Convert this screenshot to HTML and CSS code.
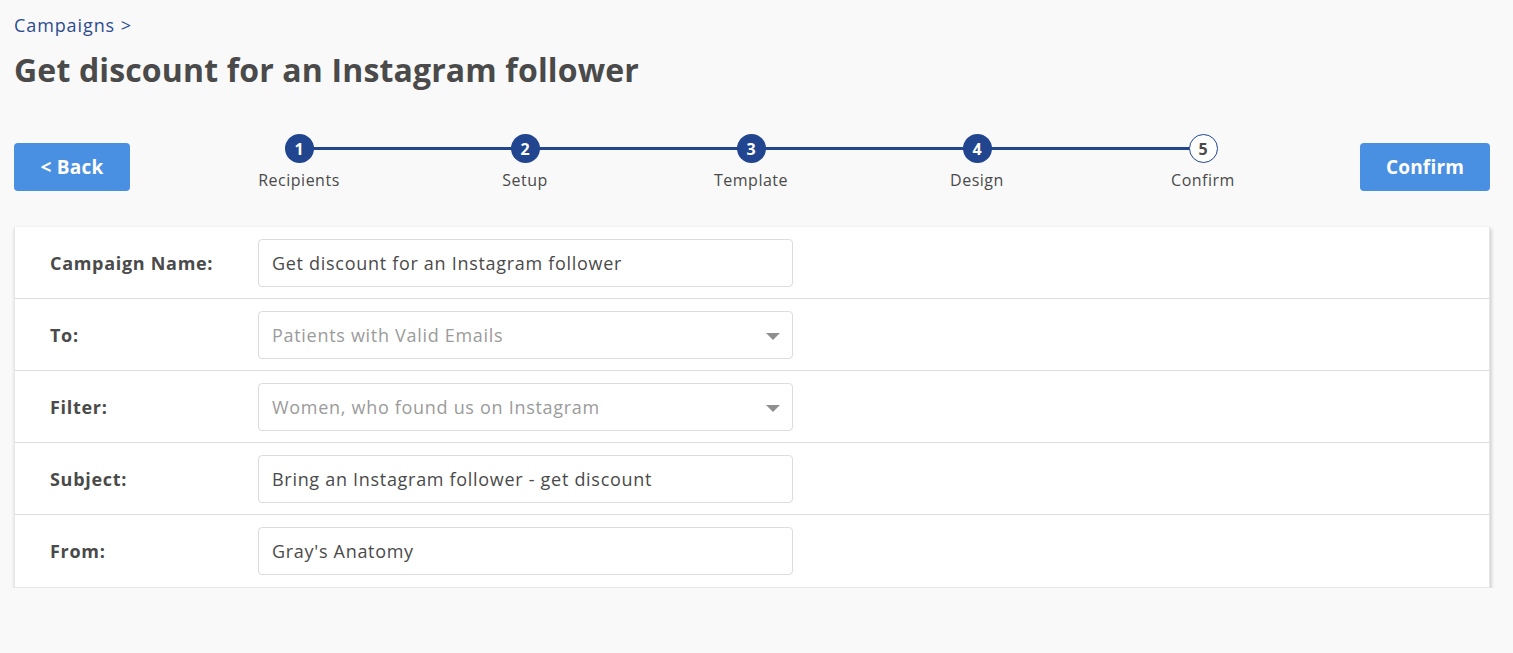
FILE: index.html
```html
<!DOCTYPE html>
<html>
<head>
<meta charset="utf-8">
<link rel="stylesheet" href="styles.css">
</head>
<body>
<div class="page">
  <div class="crumb">Campaigns &gt;</div>
  <h1 class="title">Get discount for an Instagram follower</h1>
  <div class="toolbar">
    <button class="btn">&lt; Back</button>
    <div class="stepper">
      <div class="step done"><span class="dot">1</span><span class="label">Recipients</span></div>
      <div class="step done"><span class="dot">2</span><span class="label">Setup</span></div>
      <div class="step done"><span class="dot">3</span><span class="label">Template</span></div>
      <div class="step done"><span class="dot">4</span><span class="label">Design</span></div>
      <div class="step current"><span class="dot">5</span><span class="label">Confirm</span></div>
    </div>
    <button class="btn confirm">Confirm</button>
  </div>
  <div class="card">
    <div class="row">
      <div class="field-label">Campaign Name:</div>
      <div class="input">Get discount for an Instagram follower</div>
    </div>
    <div class="row">
      <div class="field-label">To:</div>
      <div class="input select placeholder">Patients with Valid Emails<span class="caret"></span></div>
    </div>
    <div class="row">
      <div class="field-label">Filter:</div>
      <div class="input select placeholder">Women, who found us on Instagram<span class="caret"></span></div>
    </div>
    <div class="row">
      <div class="field-label">Subject:</div>
      <div class="input">Bring an Instagram follower - get discount</div>
    </div>
    <div class="row">
      <div class="field-label">From:</div>
      <div class="input">Gray's Anatomy</div>
    </div>
  </div>
</div>
</body>
</html>
```

FILE: styles.css
```css
* { box-sizing: border-box; }
html, body {
  margin: 0;
  background: #f9f9f9;
  font-family: "Open Sans", "Liberation Sans", sans-serif;
  color: #4a4a4a;
}
.page {
  padding: 13px 23px 0 14px;
}
.crumb {
  font-size: 18px;
  line-height: 24px;
  letter-spacing: 0.9px;
  color: #2c4c90;
}
.title {
  margin: 12px 0 0 0;
  font-size: 32px;
  line-height: 42px;
  font-weight: 700;
  letter-spacing: 0.15px;
  color: #4a4a4a;
}
.toolbar {
  display: flex;
  align-items: flex-end;
  margin-top: 43px;
}
.btn {
  width: 116px;
  height: 48px;
  border: none;
  border-radius: 4px;
  background: #4a90e2;
  color: #fff;
  font-family: inherit;
  font-size: 19px;
  font-weight: 700;
  letter-spacing: 0.2px;
  padding: 0;
}
.confirm {
  width: 130px;
  margin-left: auto;
}
.stepper {
  display: flex;
  margin-left: 56px;
}
.step {
  position: relative;
  width: 226px;
  display: flex;
  flex-direction: column;
  align-items: center;
}
.step::after {
  content: "";
  position: absolute;
  left: 113px;
  top: 13px;
  width: 226px;
  height: 3px;
  background: #21468f;
  z-index: 0;
}
.step:last-child::after { display: none; }
.dot {
  position: relative;
  z-index: 1;
  width: 29px;
  height: 29px;
  border-radius: 50%;
  background: #21468f;
  color: #fff;
  font-size: 16px;
  font-weight: 700;
  display: flex;
  align-items: center;
  justify-content: center;
}
.current .dot {
  background: #fff;
  border: 1.5px solid #21468f;
  color: #4a4a4a;
}
.label {
  margin-top: 6px;
  font-size: 16px;
  line-height: 22px;
  letter-spacing: 0.5px;
  color: #4a4a4a;
}
.card {
  margin-top: 36px;
  background: #fff;
  box-shadow: 1px 2px 4px rgba(0,0,0,0.22);
  border: 1px solid #e6e6e6;
  border-top: none;
}
.row {
  display: flex;
  align-items: center;
  height: 72px;
  padding-left: 35px;
  border-bottom: 1px solid #dedede;
}
.row:last-child { border-bottom: none; }
.field-label {
  width: 208px;
  font-size: 18px;
  font-weight: 700;
  letter-spacing: 0.7px;
  color: #4a4a4a;
}
.input {
  position: relative;
  width: 535px;
  height: 48px;
  border: 1px solid #dcdcdc;
  border-radius: 4px;
  padding: 0 13px;
  display: flex;
  align-items: center;
  font-size: 18px;
  letter-spacing: 0.7px;
  color: #4a4a4a;
}
.placeholder { color: #9b9b9b; }
.caret {
  position: absolute;
  right: 12px;
  top: 21px;
  width: 0;
  height: 0;
  border-left: 7px solid transparent;
  border-right: 7px solid transparent;
  border-top: 7px solid #8f8f8f;
}
```
